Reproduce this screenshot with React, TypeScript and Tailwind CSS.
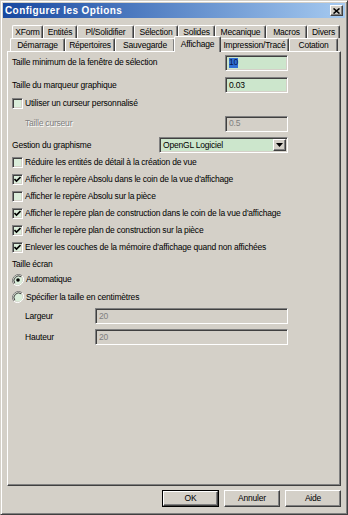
import React from "react";

const FONT = "font-['Liberation_Sans',Arial,sans-serif]";

const row1 = [
  { label: "XForm", w: "w-[31px]" },
  { label: "Entités", w: "w-[34px]" },
  { label: "Pl/Solidifier", w: "w-[57px]" },
  { label: "Sélection", w: "w-[44px]" },
  { label: "Solides", w: "w-[37px]" },
  { label: "Mecanique", w: "w-[51px]" },
  { label: "Macros", w: "w-[41px]" },
  { label: "Divers", w: "w-[33px]" },
];

const row2 = [
  { label: "Démarrage", w: "w-[55px]" },
  { label: "Répertoires", w: "w-[50px]" },
  { label: "Sauvegarde", w: "w-[60px]" },
  { label: "Affichage", w: "w-[47px]", sel: true },
  { label: "Impression/Tracé", w: "w-[69px]" },
  { label: "Cotation", w: "w-[49px]" },
];

function Tab({ label, w, sel }: { label: string; w: string; sel?: boolean }) {
  if (sel) {
    return (
      <div
        className={`${w} h-[16px] -mt-[2px] -mb-[1px] -mx-[1px] relative z-10 flex items-start justify-center pt-[2px] bg-[#d4d0c8] border-l border-t border-white border-r border-r-[#404040] rounded-t-[2px] shadow-[inset_-1px_0_0_#808080] text-[8.5px] tracking-[-0.2px] text-black leading-none`}
      >
        <span className="mt-[1px]">{label}</span>
      </div>
    );
  }
  return (
    <div
      className={`${w} h-[13px] flex items-center justify-center bg-[#d4d0c8] border-l border-t border-white border-r border-r-[#404040] rounded-t-[2px] shadow-[inset_-1px_0_0_#808080] text-[8.5px] tracking-[-0.2px] text-black leading-none`}
    >
      {label}
    </div>
  );
}

const sunken =
  "border-t border-l border-t-[#808080] border-l-[#808080] border-b border-r border-b-white border-r-white shadow-[inset_1px_1px_0_#404040,inset_-1px_-1px_0_#d4d0c8]";

function TextBox({ value, w, disabled, selected }: { value: string; w: string; disabled?: boolean; selected?: boolean }) {
  return (
    <div
      className={`${w} h-[16px] ${sunken} ${disabled ? "bg-[#d4d0c8] text-[#808080]" : "bg-[#cce6cc] text-black"} flex items-center pl-[3px] text-[8.5px] tracking-[-0.2px] leading-none`}
    >
      {selected ? (
        <span className="bg-[#2f6fd6] text-[#0a1a4a] h-[10px] flex items-center">{value}</span>
      ) : (
        <span>{value}</span>
      )}
    </div>
  );
}

function CheckBox({ checked }: { checked?: boolean }) {
  return (
    <div className={`w-[11px] h-[11px] ${sunken} bg-[#dbeedb] flex items-center justify-center shrink-0`}>
      {checked && (
        <svg width="7" height="7" viewBox="0 0 7 7">
          <path d="M0.5 3 L2.5 5 L6.5 1" stroke="#000" strokeWidth="1.6" fill="none" />
        </svg>
      )}
    </div>
  );
}

function Radio({ checked }: { checked?: boolean }) {
  return (
    <svg width="12" height="12" viewBox="0 0 12 12" className="shrink-0">
      <path d="M10.2 1.8 A6 6 0 0 0 1.8 10.2" stroke="#808080" strokeWidth="1" fill="none" />
      <path d="M1.8 10.2 A6 6 0 0 0 10.2 1.8" stroke="#ffffff" strokeWidth="1" fill="none" />
      <circle cx="6" cy="6" r="4.5" fill="#dbeedb" />
      <path d="M9.2 2.8 A4.6 4.6 0 0 0 2.8 9.2" stroke="#404040" strokeWidth="1" fill="none" />
      {checked && <circle cx="6" cy="6" r="1.8" fill="#000" />}
    </svg>
  );
}

function CheckRow({ label, checked }: { label: string; checked?: boolean }) {
  return (
    <div className="h-[17px] flex items-center gap-[2px]">
      <CheckBox checked={checked} />
      <span className="text-[8.5px] tracking-[-0.2px] leading-none">{label}</span>
    </div>
  );
}

const raised =
  "bg-[#d4d0c8] border-l border-t border-white border-r border-b border-r-[#404040] border-b-[#404040] shadow-[inset_-1px_-1px_0_#808080]";

export default function App() {
  return (
    <div
      className={`${FONT} w-[348px] h-[515px] bg-[#d4d0c8] border border-t-[#d4d0c8] border-l-[#d4d0c8] border-r-[#404040] border-b-[#404040] shadow-[inset_1px_1px_0_#ffffff,inset_-1px_-1px_0_#808080] p-[2px] flex flex-col text-black`}
    >
      {/* Title bar */}
      <div className="h-[15px] bg-gradient-to-r from-[#1848a0] to-[#a6caf0] flex items-center justify-between pl-[2px] pr-[2px]">
        <span className="text-white font-bold text-[10px] leading-none tracking-[0.4px]">Configurer les Options</span>
        <div className={`w-[13px] h-[11px] ${raised} flex items-center justify-center`}>
          <svg width="7" height="6" viewBox="0 0 7 6">
            <path d="M0.5 0.5 L6.5 5.5 M6.5 0.5 L0.5 5.5" stroke="#000" strokeWidth="1.6" />
          </svg>
        </div>
      </div>

      {/* Tabs */}
      <div className="mt-[7px] flex flex-col">
        <div className="flex pl-[9px]">
          {row1.map((t) => (
            <Tab key={t.label} label={t.label} w={t.w} />
          ))}
        </div>
        <div className="flex pl-[7px]">
          {row2.map((t) => (
            <Tab key={t.label} label={t.label} w={t.w} sel={t.sel} />
          ))}
        </div>
      </div>

      {/* Panel */}
      <div className="ml-[4px] w-[334px] h-[435px] border-l border-t border-white border-r border-b border-r-[#404040] border-b-[#404040] shadow-[inset_-1px_-1px_0_#808080] pl-[4px] pr-[52px] flex flex-col text-[8.5px] tracking-[-0.2px] leading-none">
        <div className="mt-[3px] h-[15px] flex items-center justify-between">
          <span>Taille minimum de la fenêtre de sélection</span>
          <TextBox value="10" w="w-[63px]" selected />
        </div>
        <div className="mt-[7px] h-[16px] flex items-center justify-between">
          <span>Taille du marqueur graphique</span>
          <TextBox value="0.03" w="w-[63px]" />
        </div>
        <div className="mt-[3px] h-[15px] flex items-center gap-[2px]">
          <CheckBox />
          <span>Utiliser un curseur personnalisé</span>
        </div>
        <div className="mt-[5px] h-[15px] flex items-center justify-between pl-[13px]">
          <span className="text-[#808080] [text-shadow:1px_1px_0_#ffffff]">Taille curseur</span>
          <TextBox value="0.5" w="w-[63px]" disabled />
        </div>
        <div className="mt-[6px] h-[16px] flex items-center justify-between">
          <span>Gestion du graphisme</span>
          <div className={`w-[129px] h-[16px] ${sunken} bg-[#cce6cc] flex items-center justify-between pl-[3px] pr-[1px]`}>
            <span>OpenGL Logiciel</span>
            <div className={`w-[13px] h-[12px] ${raised} flex items-center justify-center`}>
              <svg width="7" height="4" viewBox="0 0 7 4">
                <path d="M0 0 H7 L3.5 4 Z" fill="#000" />
              </svg>
            </div>
          </div>
        </div>
        <div className="mt-[1px] flex flex-col">
          <CheckRow label="Réduire les entités de détail à la création de vue" />
          <CheckRow label="Afficher le repère Absolu dans le coin de la vue d'affichage" checked />
          <CheckRow label="Afficher le repère Absolu sur la pièce" />
          <CheckRow label="Afficher le repère plan de construction dans le coin de la vue d'affichage" checked />
          <CheckRow label="Afficher le repère plan de construction sur la pièce" checked />
          <CheckRow label="Enlever les couches de la mémoire d'affichage quand non affichées" checked />
        </div>
        <div className="h-[16px] flex items-center">
          <span>Taille écran</span>
        </div>
        <div className="h-[15px] flex items-center gap-[2px]">
          <Radio checked />
          <span>Automatique</span>
        </div>
        <div className="mt-[2px] h-[16px] flex items-center gap-[2px]">
          <Radio />
          <span>Spécifier la taille en centimètres</span>
        </div>
        <div className="mt-[3px] h-[16px] flex items-center justify-between pl-[13px]">
          <span>Largeur</span>
          <TextBox value="20" w="w-[193px]" disabled />
        </div>
        <div className="mt-[5px] h-[16px] flex items-center justify-between pl-[13px]">
          <span>Hauteur</span>
          <TextBox value="20" w="w-[193px]" disabled />
        </div>
      </div>

      {/* Buttons */}
      <div className="mt-[4px] flex justify-end gap-[5px] pr-[4px] text-[8.5px] tracking-[-0.2px] leading-none">
        <div className="w-[57px] h-[17px] border border-black">
          <div className={`w-full h-full ${raised} flex items-center justify-center`}>OK</div>
        </div>
        <div className={`w-[56px] h-[17px] ${raised} flex items-center justify-center`}>Annuler</div>
        <div className={`w-[56px] h-[17px] ${raised} flex items-center justify-center`}>Aide</div>
      </div>
    </div>
  );
}
